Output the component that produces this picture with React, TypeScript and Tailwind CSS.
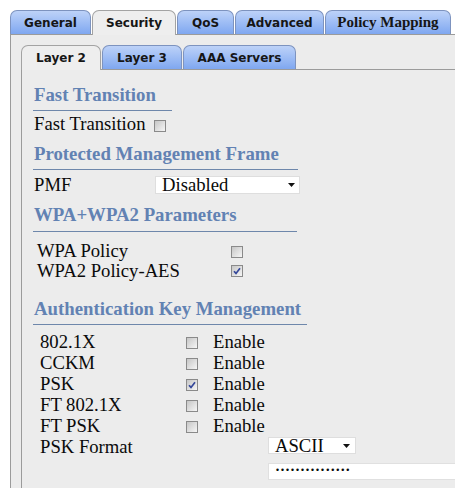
import type { ReactNode } from 'react'

const serif = "font-['Liberation_Serif','Times_New_Roman',serif]"
const verdana = "font-['DejaVu_Sans',Verdana,sans-serif]"

function Tab({ label, width, active, serifLabel }: { label: string; width: string; active?: boolean; serifLabel?: boolean }) {
  const base = `${width} flex items-center justify-center rounded-t-[7px] border border-b-0 text-[#161616] font-bold`
  const look = active
    ? 'h-[25px] -mb-px relative z-10 bg-[#eeeeee] border-[#a3a3a3]'
    : 'h-[24px] bg-gradient-to-b from-[#bdd2f8] to-[#7fa7f0] border-[#7d93bf]'
  const font = serifLabel ? `${serif} text-[15px]` : `${verdana} text-[12px]`
  return <div className={`${base} ${look} ${font}`}>{label}</div>
}

function Heading({ children, width, top, pad }: { children: ReactNode; width: string; top: string; pad: string }) {
  return (
    <div className={`${width} ${top} ${pad} border-b border-[#6e87ab] pl-[1px] font-bold text-[18.8px] leading-[20px] text-[#6282b3] ${serif}`}>
      {children}
    </div>
  )
}

function Checkbox({ checked }: { checked?: boolean }) {
  return (
    <span className="mt-[5px] flex h-[12px] w-[12px] shrink-0 items-center justify-center border border-[#8a8a8a] bg-gradient-to-br from-[#c6c6c6] to-[#f6f6f6]">
      {checked && (
        <svg width="8" height="8" viewBox="0 0 8 8">
          <path d="M1 4.2 L3 6.4 L7 1.2" fill="none" stroke="#34479a" strokeWidth="1.7" />
        </svg>
      )}
    </span>
  )
}

function Arrow() {
  return (
    <svg width="7" height="4" viewBox="0 0 7 4" className="shrink-0">
      <polygon points="0,0 7,0 3.5,4" fill="#111" />
    </svg>
  )
}

const akm = [
  { label: '802.1X', checked: false },
  { label: 'CCKM', checked: false },
  { label: 'PSK', checked: true },
  { label: 'FT 802.1X', checked: false },
  { label: 'FT PSK', checked: false },
]

export default function App() {
  return (
    <div className={`h-[498px] w-[465px] overflow-hidden bg-white text-[#0a0a0a] ${serif}`}>
      <div className="w-[455px] pl-[10px] pt-[10px]">
        <div className="flex h-[24px] items-start gap-[1px]">
          <Tab label="General" width="w-[81px]" />
          <Tab label="Security" width="w-[84px]" active />
          <Tab label="QoS" width="w-[57px]" />
          <Tab label="Advanced" width="w-[89px]" />
          <Tab label="Policy Mapping" width="w-[126px]" serifLabel />
        </div>

        <div className="h-[454px] overflow-hidden border-l border-t border-[#9b9b9b] bg-[#ececec] pl-[10px] pt-[10px]">
          <div className="flex h-[24px] items-start gap-[1px]">
            <Tab label="Layer 2" width="w-[80px]" active />
            <Tab label="Layer 3" width="w-[80px]" />
            <Tab label="AAA Servers" width="w-[113px]" />
          </div>

          <div className="h-[420px] w-[500px] border-l border-t border-[#9b9b9b] pl-[11px] text-[18.67px]">
            <Heading width="w-[139px]" top="mt-[15px]" pad="pb-[5px]">Fast Transition</Heading>
            <div className="mt-[3px] flex h-[20px] items-start gap-[9px] pl-[1px] leading-[20px]">
              <span>Fast Transition</span>
              <span className="mt-px">
                <Checkbox />
              </span>
            </div>

            <Heading width="w-[265px]" top="mt-[10px]" pad="pb-[5px]">Protected Management Frame</Heading>
            <div className="mt-[5px] flex h-[20px] items-start pl-[1px] leading-[20px]">
              <span className="w-[121px]">PMF</span>
              <div className="mt-px flex h-[18px] w-[145px] items-center justify-between border border-[#dedede] bg-white pl-[6px] pr-[4px] leading-[16px]">
                <span>Disabled</span>
                <Arrow />
              </div>
            </div>

            <Heading width="w-[264px]" top="mt-[10px]" pad="pb-[6px]">WPA+WPA2 Parameters</Heading>
            <div className="mt-[9px] pl-[4px] leading-[20px]">
              <div className="flex h-[20px] items-start">
                <span className="w-[194px]">WPA Policy</span>
                <Checkbox />
              </div>
              <div className="flex h-[20px] items-start">
                <span className="w-[194px]">WPA2 Policy-AES</span>
                <span className="-mt-px">
                  <Checkbox checked />
                </span>
              </div>
            </div>

            <Heading width="w-[274px]" top="mt-[18px]" pad="pb-[5px]">Authentication Key Management</Heading>
            <div className="mt-[6px] pl-[7px] leading-[21px]">
              {akm.map((row) => (
                <div key={row.label} className="flex h-[21px] items-start">
                  <span className="w-[146px]">{row.label}</span>
                  <span className="mt-px">
                    <Checkbox checked={row.checked} />
                  </span>
                  <span className="ml-[15px]">Enable</span>
                </div>
              ))}
              <div className="flex h-[21px] items-start">
                <span className="w-[228px]">PSK Format</span>
                <div className="mt-px flex h-[17px] w-[88px] items-center justify-between border border-[#dedede] bg-white pl-[6px] pr-[5px] leading-[15px]">
                  <span>ASCII</span>
                  <Arrow />
                </div>
              </div>
            </div>
            <div className={`ml-[235px] mt-[6px] flex h-[17px] w-[200px] items-center border border-[#e0e0e0] bg-white pb-[3px] pl-[6px] text-[8.5px] ${verdana}`}>
              •••••••••••••••
            </div>
          </div>
        </div>
      </div>
    </div>
  )
}
